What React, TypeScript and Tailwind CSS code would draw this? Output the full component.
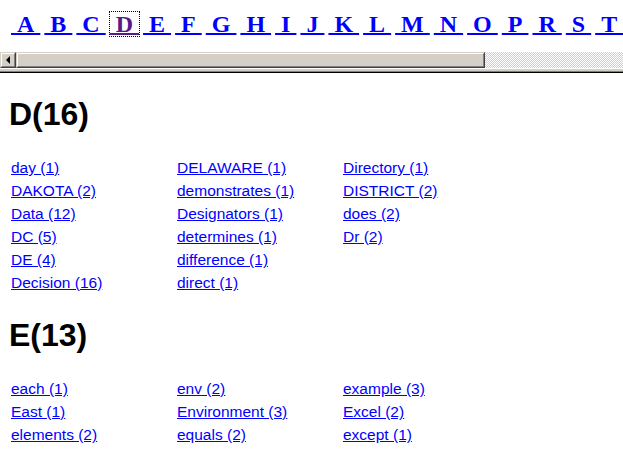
import React from 'react';

const letters = ['A', 'B', 'C', 'D', 'E', 'F', 'G', 'H', 'I', 'J', 'K', 'L', 'M', 'N', 'O', 'P', 'R', 'S', 'T'];

const sections = [
  {
    letter: 'D',
    count: 16,
    rows: 6,
    words: [
      'day (1)', 'DAKOTA (2)', 'Data (12)', 'DC (5)', 'DE (4)', 'Decision (16)',
      'DELAWARE (1)', 'demonstrates (1)', 'Designators (1)', 'determines (1)', 'difference (1)', 'direct (1)',
      'Directory (1)', 'DISTRICT (2)', 'does (2)', 'Dr (2)',
    ],
  },
  {
    letter: 'E',
    count: 13,
    rows: 3,
    words: [
      'each (1)', 'East (1)', 'elements (2)',
      'env (2)', 'Environment (3)', 'equals (2)',
      'example (3)', 'Excel (2)', 'except (1)',
    ],
  },
];

// classic 3d raised box (buttons, thumb)
function Raised({ className, children }: { className: string; children?: React.ReactNode }) {
  return (
    <div className={`border border-t-[#d4d0c8] border-l-[#d4d0c8] border-r-[#404040] border-b-[#404040] ${className}`}>
      <div className="h-full w-full border border-t-white border-l-white border-r-[#808080] border-b-[#808080] bg-[#d4d0c8] flex items-center justify-center">
        {children}
      </div>
    </div>
  );
}

function ScrollBar() {
  return (
    <div className="flex h-[16px] w-[760px] bg-[repeating-conic-gradient(#d4d0c8_0%_25%,#ffffff_0%_50%)] bg-size-[2px_2px]">
      <Raised className="w-[16px] h-full shrink-0">
        <div className="w-0 h-0 border-y-[4px] border-y-transparent border-r-[4px] border-r-black mr-[1px]" />
      </Raised>
      <Raised className="w-[469px] h-full shrink-0" />
    </div>
  );
}

function App() {
  return (
    <div className="h-screen w-full overflow-hidden bg-white">
      {/* letter index */}
      <div className="w-[760px] h-[52px] pt-[12px] pl-[11px] flex gap-[4px] items-start whitespace-nowrap font-['Liberation_Serif',serif] font-bold text-[24px] leading-[24px]">
        {letters.map((l) => (
          <a
            key={l}
            href="#"
            className={
              l === 'D'
                ? 'text-[#551a8b] underline decoration-2 outline outline-1 outline-dotted outline-black'
                : 'text-[#0000ff] underline decoration-2'
            }
          >
            {'\u00a0' + l + '\u00a0'}
          </a>
        ))}
      </div>
      <ScrollBar />
      <div className="h-[1px] bg-white" />
      <div className="h-[2px] bg-[#d4d0c8]" />
      <div className="h-[1px] bg-[#808080]" />
      <div className="h-[1px] bg-black" />

      {/* word lists */}
      <div className="pl-[11px] pt-[25px] font-['Liberation_Sans',Arial,sans-serif]">
        {sections.map((s) => (
          <div key={s.letter} className="mb-[25px]">
            <h2 className="text-[32px] leading-[32px] font-bold text-black ml-[-2px] mb-[26px]">
              {s.letter}({s.count})
            </h2>
            <div
              className={`grid grid-flow-col grid-cols-[166px_166px_166px] ${s.rows === 6 ? 'grid-rows-6' : 'grid-rows-3'}`}
            >
              {s.words.map((w) => (
                <div key={w} className="h-[23px] leading-[23px] text-[15.5px]">
                  <a href="#" className="text-[#0000ff] underline">
                    {w}
                  </a>
                </div>
              ))}
            </div>
          </div>
        ))}
      </div>
    </div>
  );
}

export default App;
